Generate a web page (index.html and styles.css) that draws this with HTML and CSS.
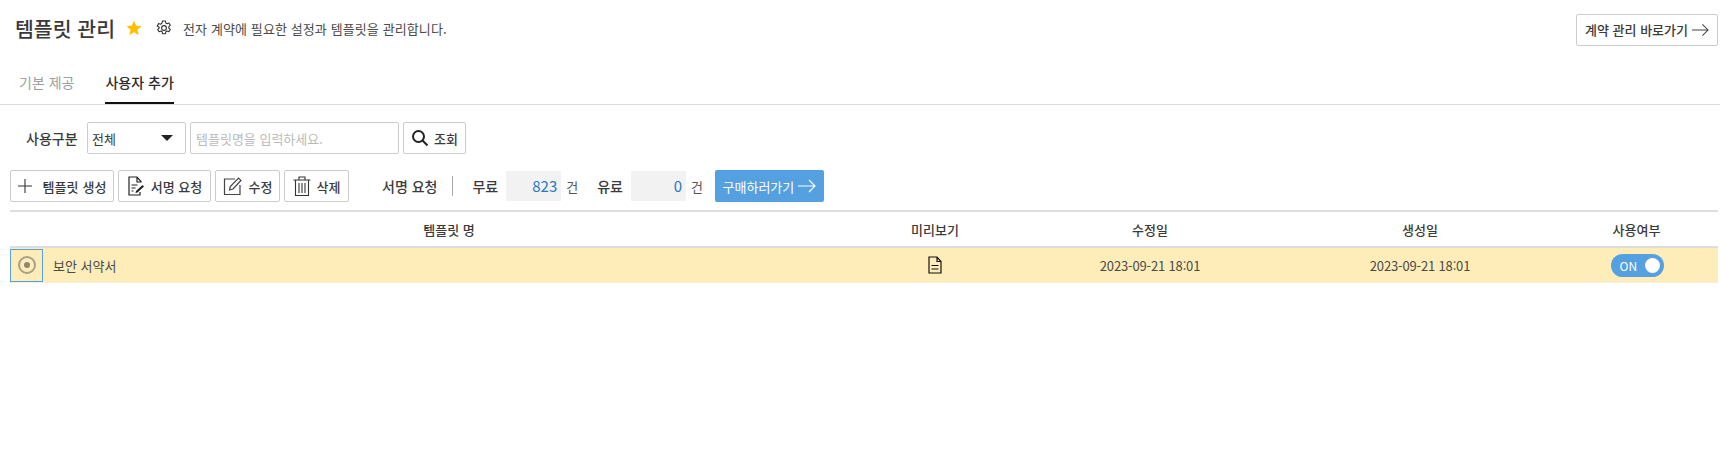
FILE: index.html
```html
<!DOCTYPE html>
<html lang="ko">
<head>
  <meta charset="UTF-8" />
  <title>템플릿 관리</title>
  <link rel="stylesheet" href="styles.css">
</head>
<body>

  <header class="page-head">
    <h1 class="page-title">템플릿 관리</h1>
    <svg class="star" viewBox="0 0 16 16" width="16" height="16"><path d="M8 .8l2.2 4.8 5.2.6-3.9 3.5 1.1 5.2L8 12.3l-4.6 2.6 1.1-5.2L.6 6.2l5.2-.6z" fill="#fcc000"/></svg>
    <svg class="gear" viewBox="0 0 16 16" width="16" height="16" fill="none" stroke="#333" stroke-width="1.1"><path d="M6.600 1h2.800l.4 2 1.200.7 1.900-.7 1.400 2.400-1.500 1.300v1.400l1.500 1.300-1.400 2.400-1.900-.7-1.200.7-.4 2H6.600l-.4-2-1.200-.7-1.900.7-1.400-2.400 1.500-1.300V7.300L1.200 6l1.400-2.400 1.900.7 1.200-.7z" stroke-linejoin="round"/><circle cx="8" cy="8" r="2.400"/></svg>
    <p class="page-desc">전자 계약에 필요한 설정과 템플릿을 관리합니다.</p>
    <a class="btn btn-shortcut">계약 관리 바로가기
      <svg class="arrow" viewBox="0 0 18 14" width="17" height="14" fill="none" stroke="#444" stroke-width="1.1"><path d="M0 7h17M11 1l6 6-6 6"/></svg>
    </a>
  </header>

  <nav class="tabs">
    <a class="tab">기본 제공</a>
    <a class="tab active">사용자 추가</a>
  </nav>

  <div class="filter">
    <label class="filter-label">사용구분</label>
    <div class="select">전체<span class="caret"></span></div>
    <input class="search" type="text" placeholder="템플릿명을 입력하세요." />
    <button class="btn btn-search">
      <svg viewBox="0 0 18 18" width="18" height="18" fill="none" stroke="#222" stroke-width="2"><circle cx="7.500" cy="7.500" r="5.500"/><path d="M11.500 11.500l5 5"/></svg>
      조회
    </button>
  </div>

  <div class="toolbar">
    <button class="btn btn-tool btn-create">
      <svg viewBox="0 0 16 16" width="16" height="16" stroke="#333" stroke-width="1.1"><path d="M8 1v14M1 8h14"/></svg>
      템플릿 생성
    </button>
    <button class="btn btn-tool btn-sign">
      <svg viewBox="0 0 18 20" width="18" height="20" fill="none" stroke="#222" stroke-width="1.2"><path d="M14 6.500V5.500L10 1H2v18h11v-3M10 1v5h4M4.500 9h6M4.500 12h4M4.500 15h2"/><path d="M9 15l6.500-6 1.500 1.500-6.500 6-2 .5z" fill="#222" stroke="none"/></svg>
      서명 요청
    </button>
    <button class="btn btn-tool btn-edit">
      <svg viewBox="0 0 20 20" width="20" height="20" fill="none" stroke="#444" stroke-width="1.2"><path d="M12 3H1.500v15.500H17V9"/><path d="M6.500 14l.8-3.500L15.500 2l2.500 2.500-8 8.500z"/></svg>
      수정
    </button>
    <button class="btn btn-tool btn-delete">
      <svg viewBox="0 0 18 20" width="18" height="20" fill="none" stroke="#333" stroke-width="1.1"><path d="M.5 4h17M6 4V1h6v3M2.500 4v15.500h13V4M6 7v10M9 7v10M12 7v10"/></svg>
      삭제
    </button>

    <span class="sign-label">서명 요청</span>
    <span class="divider"></span>
    <span class="count-label">무료</span>
    <span class="count-box">823</span>
    <span class="count-unit">건</span>
    <span class="count-label paid-label">유료</span>
    <span class="count-box">0</span>
    <span class="count-unit">건</span>
    <a class="btn-buy">구매하러가기
      <svg viewBox="0 0 18 14" width="18" height="14" fill="none" stroke="#fff" stroke-width="1.1"><path d="M0 7h17M11 1l6 6-6 6"/></svg>
    </a>
  </div>

  <div class="grid">
    <div class="grid-row grid-head">
      <div></div>
      <div>템플릿 명</div>
      <div>미리보기</div>
      <div>수정일</div>
      <div>생성일</div>
      <div>사용여부</div>
    </div>
    <div class="grid-row grid-body">
      <div class="radio-cell"><span class="radio"></span></div>
      <div class="name-cell">보안 서약서</div>
      <div class="icon-cell">
        <svg viewBox="0 0 14 18" width="14" height="18" fill="none" stroke="#111" stroke-width="1.2"><path d="M1 1h8l4 4.500V17H1zM9 1v4.500h4M3.500 9.500h7M3.500 13h7"/></svg>
      </div>
      <div class="date-cell">2023-09-21 18:01</div>
      <div class="date-cell">2023-09-21 18:01</div>
      <div class="icon-cell"><span class="toggle">ON<span class="knob"></span></span></div>
    </div>
  </div>

</body>
</html>
```

FILE: styles.css
```css
body {
  margin: 0;
  background: #fff;
  color: #3a3a3a;
  font-family: "Noto Sans CJK KR", "Noto Sans", sans-serif;
  font-size: 13px;
}

button,
input {
  font-family: inherit;
}

.page-head {
  display: flex;
  align-items: center;
  height: 56px;
  margin-bottom: 2px;
  padding: 0 2px 0 15px;
}

.page-title {
  margin: 0 11px 0 0;
  font-size: 20.5px;
  font-weight: 500;
  color: #3a3a3a;
}

.star {
  margin-right: 14px;
}

.page-desc {
  margin: 0 0 0 11px;
  font-size: 13px;
  letter-spacing: 0.1px;
  color: #4a4a4a;
}

.btn {
  display: inline-flex;
  align-items: center;
  justify-content: center;
  box-sizing: border-box;
  background: #fff;
  border: 1px solid #ccc;
  border-radius: 2px;
  color: #3a3a3a;
  font-size: 13px;
  font-weight: 500;
  padding: 0;
}

.btn-shortcut {
  width: 142px;
  height: 32px;
  margin: 3px 0 0 auto;
  gap: 4px;
}

.tabs {
  display: flex;
  height: 47px;
  padding-left: 19px;
  border-bottom: 1px solid #ddd;
  box-sizing: border-box;
  gap: 31px;
}

.tab {
  height: 46px;
  box-sizing: border-box;
  padding-top: 14px;
  font-size: 14px;
  color: #a0a0a0;
}

.tab.active {
  color: #2a2a2a;
  font-weight: 500;
  border-bottom: 2px solid #111;
}

.filter {
  display: flex;
  align-items: center;
  height: 32px;
  margin-top: 17px;
  padding-left: 26px;
}

.filter-label {
  width: 61px;
  font-weight: 500;
  font-size: 14px;
}

.select {
  display: flex;
  align-items: center;
  justify-content: space-between;
  box-sizing: border-box;
  width: 99px;
  height: 32px;
  padding: 0 12px 0 4px;
  border: 1px solid #ccc;
  border-radius: 2px;
  font-size: 13px;
}

.caret {
  border-left: 6px solid transparent;
  border-right: 6px solid transparent;
  border-top: 6px solid #222;
}

.search {
  box-sizing: border-box;
  width: 209px;
  height: 32px;
  margin-left: 4px;
  padding: 0 5px;
  border: 1px solid #ccc;
  border-radius: 2px;
  font-size: 13px;
}

.search::placeholder {
  color: #bbb;
}

.btn-search {
  width: 63px;
  height: 32px;
  margin-left: 4px;
  gap: 5px;
}

.toolbar {
  display: flex;
  align-items: center;
  height: 32px;
  margin-top: 16px;
  padding-left: 10px;
}

.btn-tool {
  height: 32px;
  gap: 6px;
  margin-right: 4px;
}

.btn-create { width: 104px; gap: 9px; letter-spacing: 0.1px; }
.btn-sign { width: 93px; }
.btn-edit { width: 65px; }
.btn-delete { width: 65px; }

.sign-label {
  margin-left: 29px;
  font-size: 14px;
  font-weight: 500;
}

.divider {
  width: 1px;
  height: 20px;
  margin: 0 19px 0 15px;
  background: #aaa;
}

.count-label {
  font-size: 14px;
  font-weight: 500;
}

.paid-label {
  margin-left: 19px;
}

.count-box {
  box-sizing: border-box;
  width: 55px;
  height: 30px;
  margin-left: 8px;
  padding-right: 4px;
  background: #f2f2f2;
  color: #2a78c2;
  font-size: 15px;
  line-height: 30px;
  text-align: right;
}

.count-unit {
  margin-left: 5px;
  font-size: 13px;
  color: #555;
}

.btn-buy {
  display: inline-flex;
  align-items: center;
  justify-content: center;
  gap: 4px;
  width: 109px;
  height: 32px;
  margin-left: 12px;
  background: #55a0e0;
  border-radius: 2px;
  color: #fff;
  font-size: 13px;
}

.grid {
  margin: 8px 2px 0 10px;
  border-top: 2px solid #ddd;
}

.grid-row {
  display: grid;
  grid-template-columns: 33px 812px 160px 270px 270px 163px;
  align-items: center;
  text-align: center;
}

.grid-head {
  height: 34px;
  border-bottom: 2px solid #ddd;
  font-weight: 500;
  font-size: 13px;
}

.grid-body {
  height: 35px;
  background: #feedb9;
  border-bottom: 1px solid #f5f0dc;
  box-sizing: border-box;
}

.radio-cell {
  box-sizing: border-box;
  display: flex;
  align-items: center;
  justify-content: center;
  height: 33px;
  border: 1px solid #55a0e0;
}

.radio {
  box-sizing: border-box;
  display: flex;
  align-items: center;
  justify-content: center;
  width: 18px;
  height: 18px;
  border: 2px solid #aaa08a;
  border-radius: 50%;
}

.radio::after {
  content: "";
  width: 6px;
  height: 6px;
  border-radius: 50%;
  background: #8f8671;
}

.name-cell {
  padding-left: 10px;
  text-align: left;
  font-size: 13px;
  color: #4a4a4a;
}

.icon-cell {
  display: flex;
  align-items: center;
  justify-content: center;
}

.date-cell {
  font-size: 13px;
  letter-spacing: -0.15px;
  color: #4a4a4a;
}

.toggle {
  position: relative;
  box-sizing: border-box;
  width: 53px;
  height: 23px;
  margin-left: 1px;
  padding: 0 0 0 9px;
  border-radius: 12px;
  background: #55a0e0;
  color: #fff;
  font-size: 12px;
  line-height: 23px;
  text-align: left;
}

.knob {
  position: absolute;
  top: 4px;
  right: 4px;
  width: 15px;
  height: 15px;
  border-radius: 50%;
  background: #fff;
}
```
